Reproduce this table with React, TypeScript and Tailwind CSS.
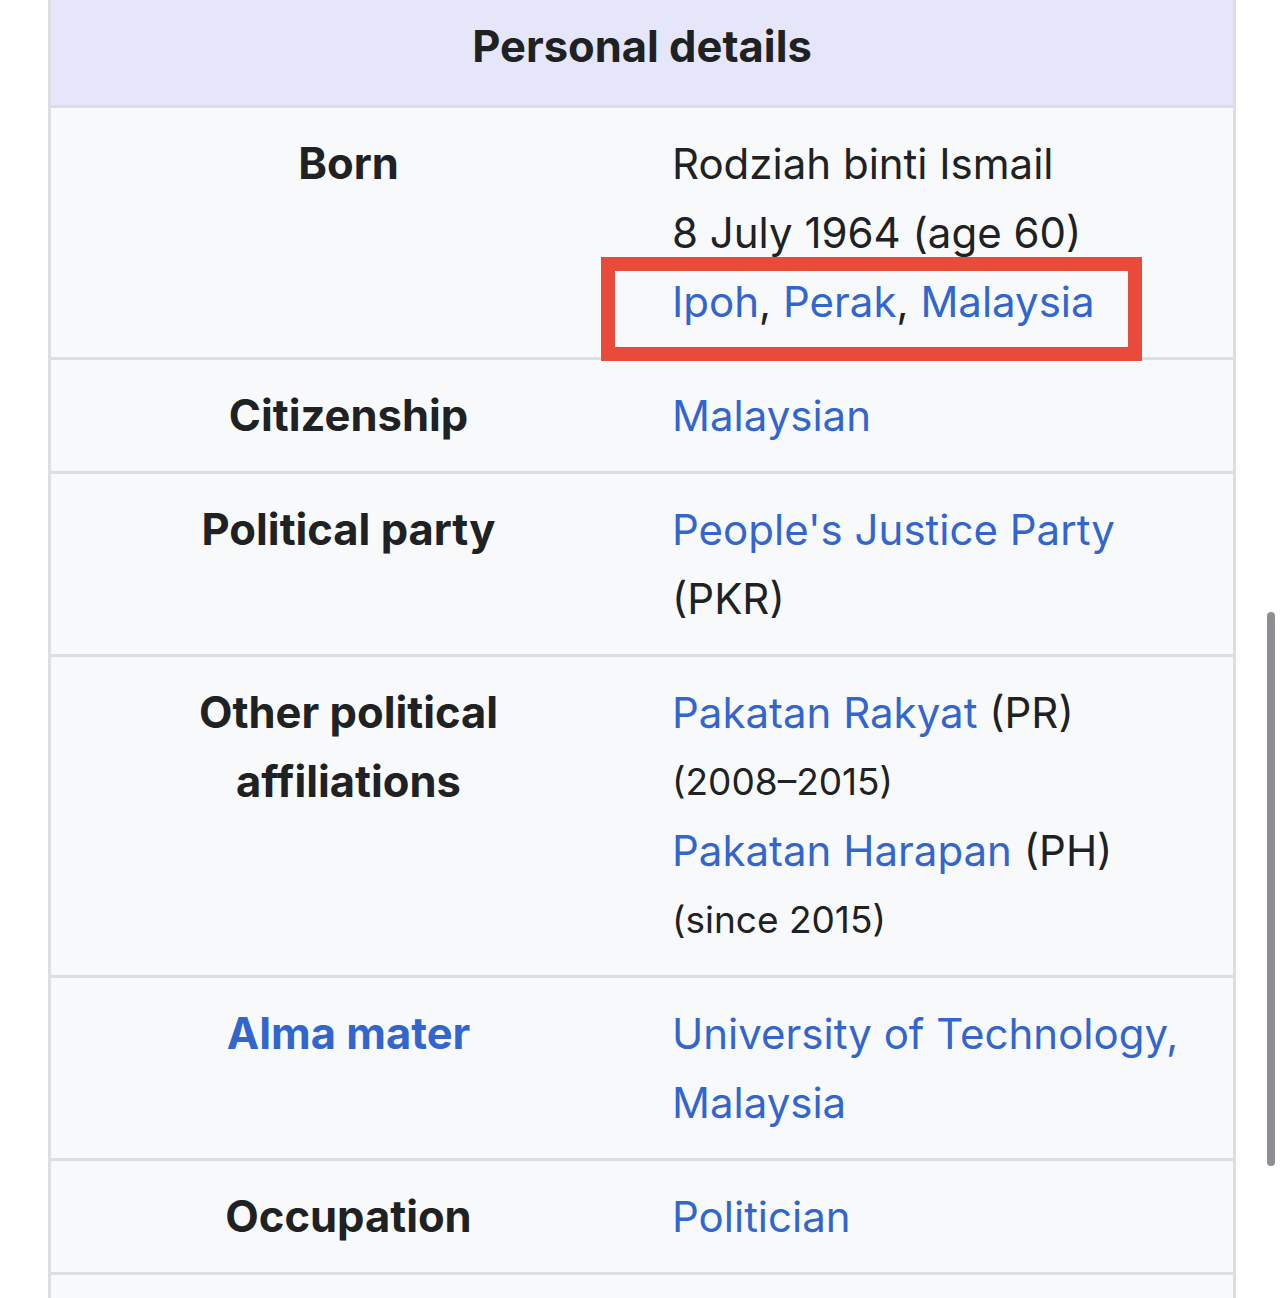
import React from "react";

const Link = ({ children }: { children: React.ReactNode }) => (
  <span className="text-[#3366cc]">{children}</span>
);

const Row = ({
  label,
  children,
}: {
  label: React.ReactNode;
  children: React.ReactNode;
}) => (
  <div className="grid grid-cols-[595px_1fr] border-b-[3px] border-[#dcdee3] bg-[#f8f9fa] py-[21px]">
    <div className="text-center text-[43.5px] font-bold text-[#202122]">{label}</div>
    <div className="pl-[26px] text-[#202122]">{children}</div>
  </div>
);

export default function App() {
  return (
    <div className="relative h-[1298px] w-[1284px] overflow-hidden bg-white font-['Inter',sans-serif] text-[42px] leading-[69px]">
      <div className="ml-[48px] w-[1188px] border-x-[3px] border-[#dcdee3]">
        {/* header */}
        <div className="flex h-[108px] items-start justify-center border-b-[3px] border-[#dcdee3] bg-[#e6e6fa] pt-[12px]">
          <h2 className="text-[43.5px] font-bold text-[#202122]">Personal details</h2>
        </div>

        <Row label="Born">
          <div>Rodziah binti Ismail</div>
          <div>8 July 1964 (age 60)</div>
          <div className="relative">
            <Link>Ipoh</Link>, <Link>Perak</Link>, <Link>Malaysia</Link>
            <span className="absolute left-[-71px] top-[-10px] h-[104px] w-[541px] border-[14px] border-[#e84a3b]"></span>
          </div>
        </Row>

        <Row label="Citizenship">
          <Link>Malaysian</Link>
        </Row>

        <Row label="Political party">
          <div>
            <Link>People's Justice Party</Link>
          </div>
          <div>(PKR)</div>
        </Row>

        <Row
          label={
            <>
              Other political
              <br />
              affiliations
            </>
          }
        >
          <div>
            <Link>Pakatan Rakyat</Link> (PR)
          </div>
          <div className="text-[37px]">(2008–2015)</div>
          <div>
            <Link>Pakatan Harapan</Link> (PH)
          </div>
          <div className="text-[37px]">(since 2015)</div>
        </Row>

        <Row label={<span className="text-[#3366cc]">Alma mater</span>}>
          <div>
            <Link>University of Technology,</Link>
          </div>
          <div>
            <Link>Malaysia</Link>
          </div>
        </Row>

        <Row label="Occupation">
          <Link>Politician</Link>
        </Row>

        <div className="h-[40px] bg-[#f8f9fa]"></div>
      </div>

      {/* scrollbar */}
      <div className="absolute left-[1267px] top-[612px] h-[554px] w-[8px] rounded-full bg-[#8e8e93]"></div>
    </div>
  );
}
